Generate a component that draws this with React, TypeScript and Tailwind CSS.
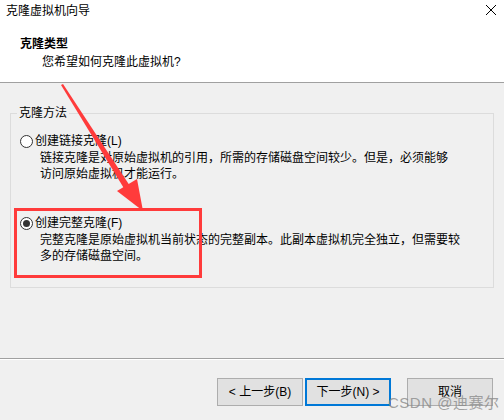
import React from "react";

const font = "font-['Liberation_Sans','Noto_Sans_CJK_SC',sans-serif]";

function Radio({ checked }: { checked?: boolean }) {
  return (
    <span className="flex h-[13px] w-[13px] shrink-0 items-center justify-center rounded-full border border-[#333333] bg-white">
      {checked && <span className="h-[7px] w-[7px] rounded-full bg-[#333333]" />}
    </span>
  );
}

function Option({
  label,
  lines,
  checked,
}: {
  label: string;
  lines: string[];
  checked?: boolean;
}) {
  return (
    <div className="flex flex-col">
      <div className="flex h-4 items-center gap-[2px] pl-[9px]">
        <Radio checked={checked} />
        <span className="leading-4">{label}</span>
      </div>
      <div className="pl-[29px] pt-[1px] leading-4">
        {lines.map((l) => (
          <div key={l}>{l}</div>
        ))}
      </div>
    </div>
  );
}

function Button({ children, focused }: { children: React.ReactNode; focused?: boolean }) {
  return (
    <button
      className={
        focused
          ? "flex h-[28px] w-[86px] items-center justify-center border-2 border-[#0078d7] bg-[#e1e1e1] text-[12px] text-black"
          : "flex h-[28px] w-[86px] items-center justify-center border border-[#adadad] bg-[#e1e1e1] text-[12px] text-black"
      }
    >
      {children}
    </button>
  );
}

export default function App() {
  return (
    <div className={`relative h-[420px] w-[504px] overflow-hidden bg-[#f0f0f0] text-[12px] text-black ${font}`}>
      {/* Header */}
      <div className="h-[82px] bg-white">
        <div className="flex h-[21px] items-center justify-between pl-[6px] pr-[7px]">
          <span className="leading-4">克隆虚拟机向导</span>
          <svg width="12" height="12" viewBox="0 0 12 12" className="mt-[-1px]">
            <path d="M1 1 L11 11 M11 1 L1 11" stroke="#000" strokeWidth="1" />
          </svg>
        </div>
        <div className="pl-[20px] pt-[15px] font-bold leading-4">克隆类型</div>
        <div className="pl-[42px] pt-[2px] leading-4">您希望如何克隆此虚拟机?</div>
      </div>
      <div className="h-px bg-[#a0a0a0]" />

      {/* Group */}
      <div className="px-[10px] pt-[22px]">
        <fieldset className="h-[183px] border border-[#dcdcdc] px-0">
          <legend className="ml-[6px] px-[2px] leading-4">克隆方法</legend>
          <div className="flex flex-col gap-[33px] pt-[12px]">
            <Option
              label="创建链接克隆(L)"
              lines={[
                "链接克隆是对原始虚拟机的引用，所需的存储磁盘空间较少。但是，必须能够",
                "访问原始虚拟机才能运行。",
              ]}
            />
            <Option
              checked
              label="创建完整克隆(F)"
              lines={[
                "完整克隆是原始虚拟机当前状态的完整副本。此副本虚拟机完全独立，但需要较",
                "多的存储磁盘空间。",
              ]}
            />
          </div>
        </fieldset>
      </div>

      {/* Footer */}
      <div className="mt-[70px] h-px bg-[#a0a0a0]" />
      <div className="h-px bg-white" />
      <div className="flex justify-end gap-[2px] pr-[11px] pt-[18px]">
        <Button>&lt; 上一步(B)</Button>
        <Button focused>下一步(N) &gt;</Button>
        <div className="w-[12px]" />
        <Button>取消</Button>
      </div>

      {/* Annotation: red box */}
      <div className="absolute left-[14px] top-[208px] h-[70px] w-[188px] border-[3px] border-[#ff3b3b]" />

      {/* Annotation: red arrow */}
      <svg className="absolute left-0 top-0" width="504" height="420" viewBox="0 0 504 420">
        <polygon points="61,85 63,84 130,186 125,190" fill="#ff3b3b" />
        <polygon points="117,191 137,179 143,211" fill="#ff3b3b" />
      </svg>

      {/* Watermark */}
      <div className="absolute left-[388px] top-[393px] text-[15px] leading-5 tracking-[0.5px] text-[#8a8a8a]/80">
        CSDN @迪赛尔
      </div>
    </div>
  );
}
